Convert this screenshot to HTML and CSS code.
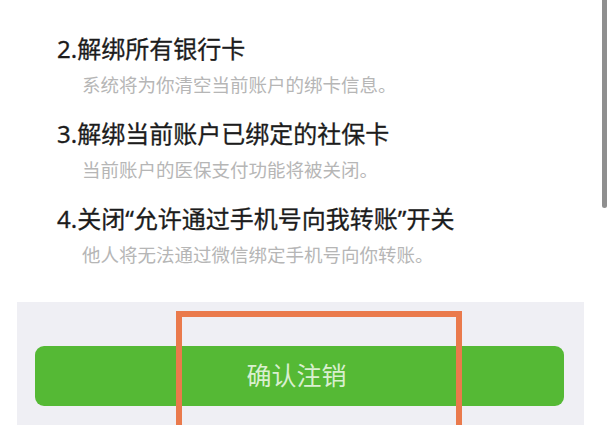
FILE: index.html
```html
<!DOCTYPE html>
<html lang="zh-CN">
<head>
<meta charset="utf-8">
<link rel="stylesheet" href="styles.css">
</head>
<body>
<div class="page">
  <div class="list">
    <div class="item">
      <div class="title">2.解绑所有银行卡</div>
      <div class="desc">系统将为你清空当前账户的绑卡信息。</div>
    </div>
    <div class="item">
      <div class="title">3.解绑当前账户已绑定的社保卡</div>
      <div class="desc">当前账户的医保支付功能将被关闭。</div>
    </div>
    <div class="item">
      <div class="title">4.关闭“允许通过手机号向我转账”开关</div>
      <div class="desc">他人将无法通过微信绑定手机号向你转账。</div>
    </div>
  </div>
  <div class="footer">
    <div class="btn">确认注销</div>
  </div>
  <div class="highlight"></div>
  <div class="scrollbar"></div>
</div>
</body>
</html>
```

FILE: styles.css
```css
html, body {
  margin: 0;
  padding: 0;
  background: #ffffff;
}
.page {
  position: relative;
  width: 612px;
  height: 425px;
  overflow: hidden;
  font-family: "Noto Sans", "Noto Sans CJK SC", sans-serif;
}
.list {
  padding: 34px 0 0 57px;
  display: flex;
  flex-direction: column;
  gap: 22px;
}
.item {
  display: flex;
  flex-direction: column;
  gap: 9px;
}
.title {
  font-size: 24px;
  line-height: 30px;
  color: #1c1c1c;
  font-weight: 400;
  -webkit-text-stroke: 0.3px #1c1c1c;
}
.desc {
  font-size: 18.5px;
  line-height: 24px;
  color: #b6b6b6;
  padding-left: 25px;
}
.footer {
  margin: 35px 28px 0 17px;
  height: 130px;
  background: #efeff4;
  padding: 44px 20px 0 18px;
  box-sizing: border-box;
}
.btn {
  height: 60px;
  border-radius: 9px;
  background: #55b935;
  color: #d9efd0;
  font-size: 25px;
  display: flex;
  align-items: center;
  justify-content: center;
  padding: 0 6px 4px 0;
  box-sizing: border-box;
}
.highlight {
  position: absolute;
  left: 176px;
  top: 311px;
  width: 286px;
  height: 200px;
  box-sizing: border-box;
  border: 6px solid #ea7a4c;
}
.scrollbar {
  position: absolute;
  left: 602px;
  top: -4px;
  width: 5px;
  height: 212px;
  border-radius: 3px;
  background: #8f8f8f;
}
```
